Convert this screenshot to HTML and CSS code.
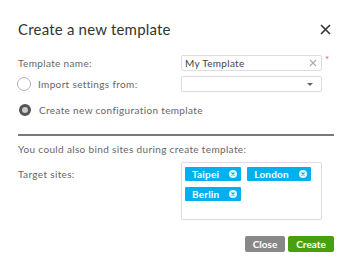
FILE: index.html
```html
<!DOCTYPE html>
<html lang="en">
<head>
    <meta charset="UTF-8">
    <title>Create a new template</title>
    <link rel="stylesheet" href="styles.css">
</head>
<body>
    <div class="dialog">
        <div class="dialog-header">
            <h2>Create a new template</h2>
            <svg class="close-icon" width="11" height="11" viewBox="0 0 11 11">
                <path d="M1 1 L10 10 M10 1 L1 10" stroke="#333" stroke-width="1.6" fill="none"/>
            </svg>
        </div>
        <div class="form-row row-name">
            <label class="label">Template name:</label>
            <div class="input-box">
                <span class="input-text">My Template</span>
                <svg class="clear-icon" width="8" height="8" viewBox="0 0 8 8">
                    <path d="M1 1 L7 7 M7 1 L1 7" stroke="#aaa" stroke-width="1.1" fill="none"/>
                </svg>
            </div>
            <span class="required">*</span>
        </div>
        <div class="form-row row-import">
            <label class="radio-label"><span class="radio"></span>Import settings from:</label>
            <div class="input-box select-box">
                <span class="caret"></span>
            </div>
        </div>
        <div class="form-row row-create">
            <label class="radio-label"><span class="radio checked"></span>Create new configuration template</label>
        </div>
        <div class="divider"></div>
        <p class="note">You could also bind sites during create template:</p>
        <div class="form-row row-target">
            <label class="label target-label">Target sites:</label>
            <div class="tag-box">
                <span class="tag">Taipei<span class="tag-x"><svg width="8" height="8" viewBox="0 0 8 8"><circle cx="4" cy="4" r="4" fill="#e6f6fd"/><path d="M2.5 2.5 L5.5 5.5 M5.5 2.5 L2.5 5.5" stroke="#00b1ee" stroke-width="1.1"/></svg></span></span>
                <span class="tag">London<span class="tag-x"><svg width="8" height="8" viewBox="0 0 8 8"><circle cx="4" cy="4" r="4" fill="#e6f6fd"/><path d="M2.5 2.5 L5.5 5.5 M5.5 2.5 L2.5 5.5" stroke="#00b1ee" stroke-width="1.1"/></svg></span></span>
                <span class="tag">Berlin<span class="tag-x"><svg width="8" height="8" viewBox="0 0 8 8"><circle cx="4" cy="4" r="4" fill="#e6f6fd"/><path d="M2.5 2.5 L5.5 5.5 M5.5 2.5 L2.5 5.5" stroke="#00b1ee" stroke-width="1.1"/></svg></span></span>
            </div>
        </div>
        <div class="actions">
            <button class="btn btn-close">Close</button>
            <button class="btn btn-create">Create</button>
        </div>
    </div>
</body>
</html>
```

FILE: styles.css
```css
* {
    margin: 0;
    padding: 0;
    box-sizing: border-box;
    font-family: "Lato", "Liberation Sans", sans-serif;
}
body {
    width: 352px;
    height: 270px;
    background: #fff;
    overflow: hidden;
}
.dialog {
    padding: 19px 18px 0 18px;
}
.dialog-header {
    display: flex;
    justify-content: space-between;
    align-items: center;
    height: 20px;
}
h2 {
    font-size: 15px;
    font-weight: 400;
    color: #333;
    letter-spacing: 0.2px;
}
.close-icon {
    margin-right: 3px;
}
.form-row {
    display: grid;
    grid-template-columns: 163px 141px auto;
    align-items: center;
}
.label, .radio-label, .note {
    font-size: 10px;
    color: #666;
    line-height: 12px;
    letter-spacing: 0.35px;
}
.row-name {
    margin-top: 16px;
}
.input-box {
    height: 16px;
    border: 1px solid #ddd;
    border-radius: 2px;
    display: flex;
    align-items: center;
    justify-content: space-between;
    padding: 0 4px 0 3px;
}
.input-text {
    font-size: 10px;
    color: #444;
    letter-spacing: 0.3px;
}
.required {
    color: #f15a5a;
    font-size: 10px;
    align-self: start;
    margin-left: 3px;
    margin-top: -2px;
}
.row-import {
    margin-top: 5px;
}
.radio-label {
    display: flex;
    align-items: center;
    margin-left: -1px;
}
.radio {
    width: 14px;
    height: 14px;
    border: 1.5px solid #b5b5b5;
    border-radius: 50%;
    margin-right: 7px;
}
.radio.checked {
    width: 12px;
    height: 12px;
    margin: 0 8px 0 2px;
    border: 3.5px solid #555;
    background: #ccc;
}
.select-box {
    justify-content: flex-end;
}
.caret {
    width: 0;
    height: 0;
    border-left: 3px solid transparent;
    border-right: 3px solid transparent;
    border-top: 3px solid #666;
    margin-right: 4px;
}
.row-create {
    margin-top: 11px;
    height: 14px;
}
.row-create .radio-label {
    grid-column: 1 / 4;
}
.divider {
    margin-top: 17px;
    height: 2px;
    background: #7a7a7a;
}
.note {
    margin-top: 7px;
}
.row-target {
    margin-top: 7px;
    align-items: start;
}
.target-label {
    padding-top: 6px;
}
.tag-box {
    height: 58px;
    border: 1px solid #ddd;
    border-radius: 2px;
    padding: 4px 3px;
    display: flex;
    flex-wrap: wrap;
    align-content: flex-start;
    gap: 6px 6px;
}
.tag {
    display: flex;
    align-items: center;
    height: 14px;
    padding: 0 4px 0 7px;
    background: #00b1ee;
    color: #fff;
    font-size: 10px;
    font-weight: 700;
    letter-spacing: 0.2px;
    border-radius: 1px;
}
.tag-x {
    display: flex;
    margin-left: 10px;
}
.actions {
    margin-top: 16px;
    display: flex;
    justify-content: flex-end;
    gap: 3px;
}
.btn {
    height: 16px;
    border: none;
    border-radius: 2px;
    color: #fff;
    font-size: 10px;
    font-weight: 700;
    padding: 0 5px;
}
.btn-close {
    background: #888;
    width: 40px;
}
.btn-create {
    background: #4a9f0e;
    width: 46px;
}
```
